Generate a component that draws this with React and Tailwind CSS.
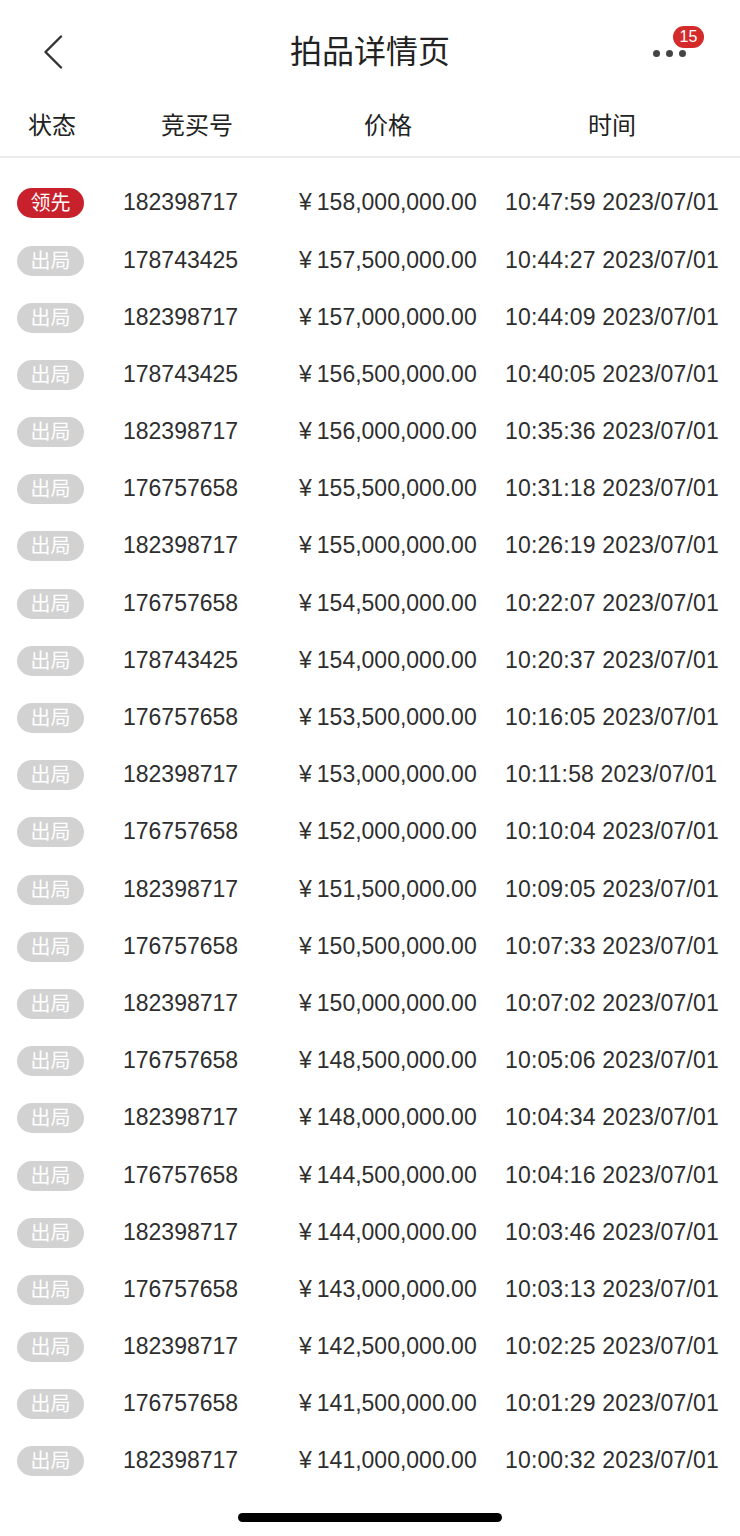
const rows = [
  ['领先', '182398717', '158,000,000.00', '10:47:59'],
  ['出局', '178743425', '157,500,000.00', '10:44:27'],
  ['出局', '182398717', '157,000,000.00', '10:44:09'],
  ['出局', '178743425', '156,500,000.00', '10:40:05'],
  ['出局', '182398717', '156,000,000.00', '10:35:36'],
  ['出局', '176757658', '155,500,000.00', '10:31:18'],
  ['出局', '182398717', '155,000,000.00', '10:26:19'],
  ['出局', '176757658', '154,500,000.00', '10:22:07'],
  ['出局', '178743425', '154,000,000.00', '10:20:37'],
  ['出局', '176757658', '153,500,000.00', '10:16:05'],
  ['出局', '182398717', '153,000,000.00', '10:11:58'],
  ['出局', '176757658', '152,000,000.00', '10:10:04'],
  ['出局', '182398717', '151,500,000.00', '10:09:05'],
  ['出局', '176757658', '150,500,000.00', '10:07:33'],
  ['出局', '182398717', '150,000,000.00', '10:07:02'],
  ['出局', '176757658', '148,500,000.00', '10:05:06'],
  ['出局', '182398717', '148,000,000.00', '10:04:34'],
  ['出局', '176757658', '144,500,000.00', '10:04:16'],
  ['出局', '182398717', '144,000,000.00', '10:03:46'],
  ['出局', '176757658', '143,000,000.00', '10:03:13'],
  ['出局', '182398717', '142,500,000.00', '10:02:25'],
  ['出局', '176757658', '141,500,000.00', '10:01:29'],
  ['出局', '182398717', '141,000,000.00', '10:00:32'],
];

const font = { fontFamily: '"Liberation Sans", "Noto Sans CJK SC", sans-serif' };

const BackIcon = () => (
  <svg width="20" height="34" viewBox="0 0 20 34" fill="none">
    <path d="M18 1.5 L2.5 17 L18 32.5" stroke="#333" strokeWidth="2.4" strokeLinecap="round" strokeLinejoin="round" />
  </svg>
);

const App = () => {
  return (
    <div className="w-[740px] h-[1536px] bg-white text-[#2a2a2a] flex flex-col" style={font}>
      {/* nav */}
      <div className="h-[100px] flex items-center pt-[4px]">
        <div className="w-[140px] pl-[43px] flex items-center">
          <BackIcon />
        </div>
        <div className="flex-1 text-center text-[32px] text-[#222]">拍品详情页</div>
        <div className="w-[140px] flex justify-end pr-[54px]">
          <div className="relative flex gap-[6px] mt-[2px]">
            <span className="w-[7px] h-[7px] rounded-full bg-[#444]" />
            <span className="w-[7px] h-[7px] rounded-full bg-[#444]" />
            <span className="w-[7px] h-[7px] rounded-full bg-[#444]" />
            <span className="absolute left-[20px] top-[-24px] h-[22px] min-w-[31px] px-[5px] rounded-full bg-[#d42a2a] text-white text-[16px] leading-[22px] text-center">
              15
            </span>
          </div>
        </div>
      </div>

      {/* table header */}
      <div className="h-[58px] flex items-center text-[24px] text-[#222] border-b-2 border-[#ededed] pb-[4px]">
        <div className="w-[104px] text-center">状态</div>
        <div className="w-[186px] text-center">竞买号</div>
        <div className="w-[196px] text-center">价格</div>
        <div className="flex-1 text-center pr-[2px]">时间</div>
      </div>

      {/* rows */}
      <div className="flex flex-col pt-[16px]">
        {rows.map((r, i) => (
          <div key={i} className="h-[57.2px] flex items-center text-[23px] text-[#2e2e2e]">
            <div className="w-[123px] pl-[17px]">
              <span
                className={
                  'inline-block w-[67px] h-[30px] leading-[30px] rounded-full text-center text-white text-[20px] ' +
                  (r[0] === '领先' ? 'bg-[#c9212b]' : 'bg-[#d2d2d2]')
                }
              >
                {r[0]}
              </span>
            </div>
            <div className="w-[176px]">{r[1]}</div>
            <div className="w-[206px]">
              <span className="mr-[5px]">¥</span>
              {r[2]}
            </div>
            <div className="tracking-[0.15px]">{r[3]} 2023/07/01</div>
          </div>
        ))}
      </div>

      <div className="flex-1 flex items-end justify-center pb-[14px]">
        <div className="w-[264px] h-[9px] rounded-full bg-black" />
      </div>
    </div>
  );
};

export default App;
